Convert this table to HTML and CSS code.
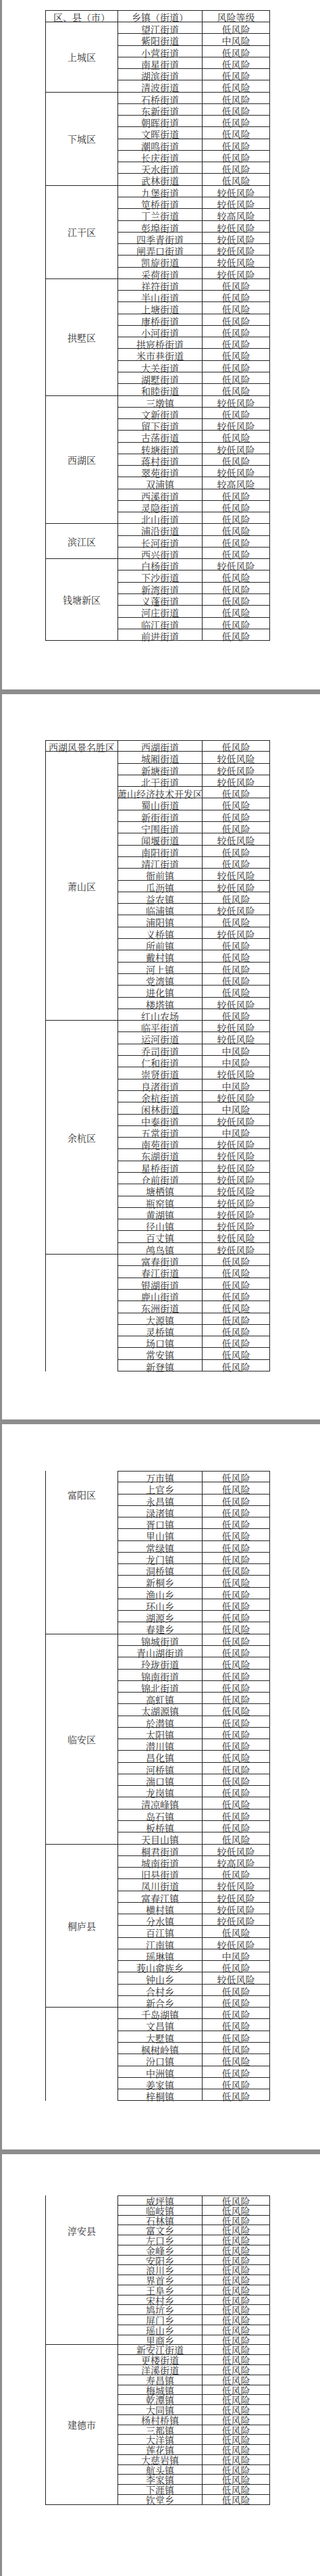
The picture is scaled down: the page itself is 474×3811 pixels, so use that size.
FILE: index.html
```html
<!DOCTYPE html>
<html lang="zh-CN">
<head>
<meta charset="utf-8">
<title>杭州市各乡镇（街道）风险等级</title>
<link rel="stylesheet" href="styles.css">
</head>
<body>
<div class="viewer">

<section class="page p1">
<div class="tbl tbl-p1">
<div class="d t hd">区、县（市）</div><div class="n t hd">乡镇（街道）</div><div class="r t hd">风险等级</div>

<div class="d" style="grid-row: span 6">上城区</div>
<div class="n">望江街道</div><div class="r">低风险</div>
<div class="n">紫阳街道</div><div class="r">中风险</div>
<div class="n">小营街道</div><div class="r">低风险</div>
<div class="n">南星街道</div><div class="r">低风险</div>
<div class="n">湖滨街道</div><div class="r">低风险</div>
<div class="n">清波街道</div><div class="r">低风险</div>

<div class="d" style="grid-row: span 8">下城区</div>
<div class="n">石桥街道</div><div class="r">低风险</div>
<div class="n">东新街道</div><div class="r">低风险</div>
<div class="n">朝晖街道</div><div class="r">低风险</div>
<div class="n">文晖街道</div><div class="r">低风险</div>
<div class="n">潮鸣街道</div><div class="r">低风险</div>
<div class="n">长庆街道</div><div class="r">低风险</div>
<div class="n">天水街道</div><div class="r">低风险</div>
<div class="n">武林街道</div><div class="r">低风险</div>

<div class="d" style="grid-row: span 8">江干区</div>
<div class="n">九堡街道</div><div class="r">较低风险</div>
<div class="n">笕桥街道</div><div class="r">较低风险</div>
<div class="n">丁兰街道</div><div class="r">较高风险</div>
<div class="n">彭埠街道</div><div class="r">较低风险</div>
<div class="n">四季青街道</div><div class="r">较低风险</div>
<div class="n">闸弄口街道</div><div class="r">较低风险</div>
<div class="n">凯旋街道</div><div class="r">较低风险</div>
<div class="n">采荷街道</div><div class="r">较低风险</div>

<div class="d" style="grid-row: span 10">拱墅区</div>
<div class="n">祥符街道</div><div class="r">低风险</div>
<div class="n">半山街道</div><div class="r">低风险</div>
<div class="n">上塘街道</div><div class="r">低风险</div>
<div class="n">康桥街道</div><div class="r">低风险</div>
<div class="n">小河街道</div><div class="r">低风险</div>
<div class="n">拱宸桥街道</div><div class="r">低风险</div>
<div class="n">米市巷街道</div><div class="r">低风险</div>
<div class="n">大关街道</div><div class="r">低风险</div>
<div class="n">湖墅街道</div><div class="r">低风险</div>
<div class="n">和睦街道</div><div class="r">低风险</div>

<div class="d" style="grid-row: span 11">西湖区</div>
<div class="n">三墩镇</div><div class="r">较低风险</div>
<div class="n">文新街道</div><div class="r">低风险</div>
<div class="n">留下街道</div><div class="r">较低风险</div>
<div class="n">古荡街道</div><div class="r">低风险</div>
<div class="n">转塘街道</div><div class="r">较低风险</div>
<div class="n">蒋村街道</div><div class="r">低风险</div>
<div class="n">翠苑街道</div><div class="r">较低风险</div>
<div class="n">双浦镇</div><div class="r">较高风险</div>
<div class="n">西溪街道</div><div class="r">低风险</div>
<div class="n">灵隐街道</div><div class="r">低风险</div>
<div class="n">北山街道</div><div class="r">低风险</div>

<div class="d" style="grid-row: span 3">滨江区</div>
<div class="n">浦沿街道</div><div class="r">低风险</div>
<div class="n">长河街道</div><div class="r">低风险</div>
<div class="n">西兴街道</div><div class="r">低风险</div>

<div class="d" style="grid-row: span 7">钱塘新区</div>
<div class="n">白杨街道</div><div class="r">较低风险</div>
<div class="n">下沙街道</div><div class="r">低风险</div>
<div class="n">新湾街道</div><div class="r">低风险</div>
<div class="n">义蓬街道</div><div class="r">低风险</div>
<div class="n">河庄街道</div><div class="r">低风险</div>
<div class="n">临江街道</div><div class="r">低风险</div>
<div class="n">前进街道</div><div class="r">低风险</div>
</div>
</section>

<section class="page p2">
<div class="tbl tbl-p2">
<div class="d t">西湖风景名胜区</div><div class="n t">西湖街道</div><div class="r t">低风险</div>

<div class="d" style="grid-row: span 23">萧山区</div>
<div class="n">城厢街道</div><div class="r">较低风险</div>
<div class="n">新塘街道</div><div class="r">较低风险</div>
<div class="n">北干街道</div><div class="r">较低风险</div>
<div class="n">萧山经济技术开发区</div><div class="r">低风险</div>
<div class="n">蜀山街道</div><div class="r">低风险</div>
<div class="n">新街街道</div><div class="r">低风险</div>
<div class="n">宁围街道</div><div class="r">低风险</div>
<div class="n">闻堰街道</div><div class="r">较低风险</div>
<div class="n">南阳街道</div><div class="r">低风险</div>
<div class="n">靖江街道</div><div class="r">低风险</div>
<div class="n">衙前镇</div><div class="r">较低风险</div>
<div class="n">瓜沥镇</div><div class="r">较低风险</div>
<div class="n">益农镇</div><div class="r">低风险</div>
<div class="n">临浦镇</div><div class="r">较低风险</div>
<div class="n">浦阳镇</div><div class="r">低风险</div>
<div class="n">义桥镇</div><div class="r">较低风险</div>
<div class="n">所前镇</div><div class="r">低风险</div>
<div class="n">戴村镇</div><div class="r">低风险</div>
<div class="n">河上镇</div><div class="r">低风险</div>
<div class="n">党湾镇</div><div class="r">低风险</div>
<div class="n">进化镇</div><div class="r">低风险</div>
<div class="n">楼塔镇</div><div class="r">较低风险</div>
<div class="n">红山农场</div><div class="r">低风险</div>

<div class="d" style="grid-row: span 20">余杭区</div>
<div class="n">临平街道</div><div class="r">较低风险</div>
<div class="n">运河街道</div><div class="r">较低风险</div>
<div class="n">乔司街道</div><div class="r">中风险</div>
<div class="n">仁和街道</div><div class="r">中风险</div>
<div class="n">崇贤街道</div><div class="r">较低风险</div>
<div class="n">良渚街道</div><div class="r">中风险</div>
<div class="n">余杭街道</div><div class="r">较低风险</div>
<div class="n">闲林街道</div><div class="r">中风险</div>
<div class="n">中泰街道</div><div class="r">较低风险</div>
<div class="n">五常街道</div><div class="r">中风险</div>
<div class="n">南苑街道</div><div class="r">较低风险</div>
<div class="n">东湖街道</div><div class="r">较低风险</div>
<div class="n">星桥街道</div><div class="r">较低风险</div>
<div class="n">仓前街道</div><div class="r">较低风险</div>
<div class="n">塘栖镇</div><div class="r">较低风险</div>
<div class="n">瓶窑镇</div><div class="r">较低风险</div>
<div class="n">黄湖镇</div><div class="r">较低风险</div>
<div class="n">径山镇</div><div class="r">较低风险</div>
<div class="n">百丈镇</div><div class="r">较低风险</div>
<div class="n">鸬鸟镇</div><div class="r">较低风险</div>

<div class="d open-b" style="grid-row: span 10"></div>
<div class="n">富春街道</div><div class="r">低风险</div>
<div class="n">春江街道</div><div class="r">低风险</div>
<div class="n">银湖街道</div><div class="r">低风险</div>
<div class="n">鹿山街道</div><div class="r">低风险</div>
<div class="n">东洲街道</div><div class="r">低风险</div>
<div class="n">大源镇</div><div class="r">低风险</div>
<div class="n">灵桥镇</div><div class="r">低风险</div>
<div class="n">场口镇</div><div class="r">低风险</div>
<div class="n">常安镇</div><div class="r">低风险</div>
<div class="n">新登镇</div><div class="r">低风险</div>
</div>
</section>

<section class="page p3">
<div class="tbl tbl-p3">
<div class="d lbl-fuyang" style="grid-row: span 14">富阳区</div>
<div class="n t">万市镇</div><div class="r t">低风险</div>
<div class="n">上官乡</div><div class="r">低风险</div>
<div class="n">永昌镇</div><div class="r">低风险</div>
<div class="n">渌渚镇</div><div class="r">低风险</div>
<div class="n">胥口镇</div><div class="r">低风险</div>
<div class="n">里山镇</div><div class="r">低风险</div>
<div class="n">常绿镇</div><div class="r">低风险</div>
<div class="n">龙门镇</div><div class="r">低风险</div>
<div class="n">洞桥镇</div><div class="r">低风险</div>
<div class="n">新桐乡</div><div class="r">低风险</div>
<div class="n">渔山乡</div><div class="r">低风险</div>
<div class="n">环山乡</div><div class="r">低风险</div>
<div class="n">湖源乡</div><div class="r">低风险</div>
<div class="n">春建乡</div><div class="r">低风险</div>

<div class="d" style="grid-row: span 18">临安区</div>
<div class="n">锦城街道</div><div class="r">低风险</div>
<div class="n">青山湖街道</div><div class="r">低风险</div>
<div class="n">玲珑街道</div><div class="r">低风险</div>
<div class="n">锦南街道</div><div class="r">低风险</div>
<div class="n">锦北街道</div><div class="r">低风险</div>
<div class="n">高虹镇</div><div class="r">低风险</div>
<div class="n">太湖源镇</div><div class="r">低风险</div>
<div class="n">於潜镇</div><div class="r">低风险</div>
<div class="n">太阳镇</div><div class="r">低风险</div>
<div class="n">潜川镇</div><div class="r">低风险</div>
<div class="n">昌化镇</div><div class="r">低风险</div>
<div class="n">河桥镇</div><div class="r">低风险</div>
<div class="n">湍口镇</div><div class="r">低风险</div>
<div class="n">龙岗镇</div><div class="r">低风险</div>
<div class="n">清凉峰镇</div><div class="r">低风险</div>
<div class="n">岛石镇</div><div class="r">低风险</div>
<div class="n">板桥镇</div><div class="r">低风险</div>
<div class="n">天目山镇</div><div class="r">低风险</div>

<div class="d" style="grid-row: span 14">桐庐县</div>
<div class="n">桐君街道</div><div class="r">较低风险</div>
<div class="n">城南街道</div><div class="r">较高风险</div>
<div class="n">旧县街道</div><div class="r">低风险</div>
<div class="n">凤川街道</div><div class="r">较低风险</div>
<div class="n">富春江镇</div><div class="r">较低风险</div>
<div class="n">横村镇</div><div class="r">较低风险</div>
<div class="n">分水镇</div><div class="r">较低风险</div>
<div class="n">百江镇</div><div class="r">低风险</div>
<div class="n">江南镇</div><div class="r">较低风险</div>
<div class="n">瑶琳镇</div><div class="r">中风险</div>
<div class="n">莪山畲族乡</div><div class="r">低风险</div>
<div class="n">钟山乡</div><div class="r">较低风险</div>
<div class="n">合村乡</div><div class="r">低风险</div>
<div class="n">新合乡</div><div class="r">低风险</div>

<div class="d open-b" style="grid-row: span 8"></div>
<div class="n">千岛湖镇</div><div class="r">低风险</div>
<div class="n">文昌镇</div><div class="r">低风险</div>
<div class="n">大墅镇</div><div class="r">低风险</div>
<div class="n">枫树岭镇</div><div class="r">低风险</div>
<div class="n">汾口镇</div><div class="r">低风险</div>
<div class="n">中洲镇</div><div class="r">低风险</div>
<div class="n">姜家镇</div><div class="r">低风险</div>
<div class="n">梓桐镇</div><div class="r">低风险</div>
</div>
</section>

<section class="page p4">
<div class="tbl tbl-p4">
<div class="d lbl-chunan" style="grid-row: span 15">淳安县</div>
<div class="n t">威坪镇</div><div class="r t">低风险</div>
<div class="n">临岐镇</div><div class="r">低风险</div>
<div class="n">石林镇</div><div class="r">低风险</div>
<div class="n">富文乡</div><div class="r">低风险</div>
<div class="n">左口乡</div><div class="r">低风险</div>
<div class="n">金峰乡</div><div class="r">低风险</div>
<div class="n">安阳乡</div><div class="r">低风险</div>
<div class="n">浪川乡</div><div class="r">低风险</div>
<div class="n">界首乡</div><div class="r">低风险</div>
<div class="n">王阜乡</div><div class="r">低风险</div>
<div class="n">宋村乡</div><div class="r">低风险</div>
<div class="n">鸠坑乡</div><div class="r">低风险</div>
<div class="n">屏门乡</div><div class="r">低风险</div>
<div class="n">瑶山乡</div><div class="r">低风险</div>
<div class="n">里商乡</div><div class="r">低风险</div>

<div class="d" style="grid-row: span 16">建德市</div>
<div class="n">新安江街道</div><div class="r">低风险</div>
<div class="n">更楼街道</div><div class="r">低风险</div>
<div class="n">洋溪街道</div><div class="r">低风险</div>
<div class="n">寿昌镇</div><div class="r">低风险</div>
<div class="n">梅城镇</div><div class="r">低风险</div>
<div class="n">乾潭镇</div><div class="r">低风险</div>
<div class="n">大同镇</div><div class="r">低风险</div>
<div class="n">杨村桥镇</div><div class="r">低风险</div>
<div class="n">三都镇</div><div class="r">低风险</div>
<div class="n">大洋镇</div><div class="r">低风险</div>
<div class="n">莲花镇</div><div class="r">低风险</div>
<div class="n">大慈岩镇</div><div class="r">低风险</div>
<div class="n">航头镇</div><div class="r">低风险</div>
<div class="n">李家镇</div><div class="r">低风险</div>
<div class="n">下涯镇</div><div class="r">低风险</div>
<div class="n">钦堂乡</div><div class="r">低风险</div>
</div>
</section>

</div>
</body>
</html>
```

FILE: styles.css
```css
html, body {
  margin: 0;
  padding: 0;
  background: #8d8d8d;
}

.viewer {
  padding-left: 3px;
  display: flex;
  flex-direction: column;
  gap: 7px;
  font-family: "Noto Serif CJK SC", "Noto Serif SC", "AR PL UMing CN", "Noto Sans CJK SC", serif;
  font-size: 14px;
  color: #353535;
}

.page {
  background: #ffffff;
  box-sizing: border-box;
  padding-left: 64px;
  height: 1073px;
}

.p1 { height: 1020px; padding-top: 15px; }
.p2 { padding-top: 68px; }
.p3 { padding-top: 69px; }
.p4 { padding-top: 61px; height: 624px; }

.tbl {
  display: grid;
  grid-template-columns: 107px 125px 100px;
  grid-auto-rows: 17.3px;
  width: max-content;
  border-left: 1px solid #262626;
}

.tbl-p1 {
  grid-template-rows: 18px;
  grid-auto-rows: 17.27px;
}
.tbl-p2 { grid-auto-rows: 17.3px; }
.tbl-p3 { grid-auto-rows: 17.28px; }
.tbl-p4 { grid-auto-rows: 14.77px; }

.d, .n, .r {
  box-sizing: border-box;
  border-right: 1px solid #262626;
  border-bottom: 1px solid #262626;
  display: flex;
  justify-content: center;
  align-items: flex-start;
  padding-top: 2px;
  line-height: 16px;
  white-space: nowrap;
}

.d { grid-column: 1; align-items: center; padding-top: 0; }
.n { grid-column: 2; }
.r { grid-column: 3; }

.t { border-top: 1px solid #262626; padding-top: 1px; }
.hd { padding-top: 1px; }
.d.t { padding-top: 1px; align-items: flex-start; }

.open-b { border-bottom: none; }

.lbl-fuyang { align-items: flex-start; padding-top: 27px; }
.lbl-chunan { align-items: flex-start; padding-top: 44px; }

.tbl-p4 .n, .tbl-p4 .r {
  padding-top: 0;
  line-height: 15px;
}
```
